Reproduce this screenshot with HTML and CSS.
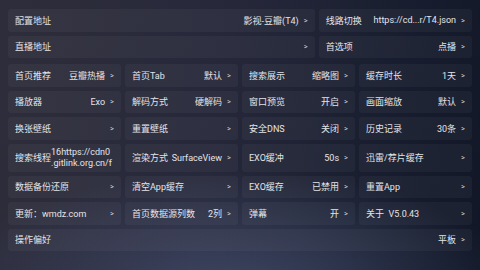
FILE: index.html
```html
<!DOCTYPE html>
<html lang="zh">
<head>
<meta charset="utf-8">
<link rel="stylesheet" href="styles.css">
</head>
<body>
<div class="page">
  <div class="top">
    <div class="cell"><span class="label">配置地址</span><span class="value">影视-豆瓣(T4)</span><span class="arrow">&gt;</span></div>
    <div class="cell"><span class="label">线路切换</span><span class="value">https://cd...r/T4.json</span><span class="arrow">&gt;</span></div>
    <div class="cell"><span class="label">直播地址</span><span class="value"></span><span class="arrow">&gt;</span></div>
    <div class="cell"><span class="label">首选项</span><span class="value">点播</span><span class="arrow">&gt;</span></div>
  </div>
  <div class="grid">
    <div class="cell"><span class="label">首页推荐</span><span class="value">豆瓣热播</span><span class="arrow">&gt;</span></div>
    <div class="cell"><span class="label">首页Tab</span><span class="value">默认</span><span class="arrow">&gt;</span></div>
    <div class="cell"><span class="label">搜索展示</span><span class="value">缩略图</span><span class="arrow">&gt;</span></div>
    <div class="cell"><span class="label">缓存时长</span><span class="value">1天</span><span class="arrow">&gt;</span></div>

    <div class="cell"><span class="label">播放器</span><span class="value">Exo</span><span class="arrow">&gt;</span></div>
    <div class="cell"><span class="label">解码方式</span><span class="value">硬解码</span><span class="arrow">&gt;</span></div>
    <div class="cell"><span class="label">窗口预览</span><span class="value">开启</span><span class="arrow">&gt;</span></div>
    <div class="cell"><span class="label">画面缩放</span><span class="value">默认</span><span class="arrow">&gt;</span></div>

    <div class="cell"><span class="label">换张壁纸</span><span class="value"></span><span class="arrow">&gt;</span></div>
    <div class="cell"><span class="label">重置壁纸</span><span class="value"></span><span class="arrow">&gt;</span></div>
    <div class="cell"><span class="label">安全DNS</span><span class="value">关闭</span><span class="arrow">&gt;</span></div>
    <div class="cell"><span class="label">历史记录</span><span class="value">30条</span><span class="arrow">&gt;</span></div>

    <div class="cell tall"><span class="label">搜索线程</span><span class="multi"><span class="line">16https://cdn0</span><span class="line">.gitlink.org.cn/f</span></span></div>
    <div class="cell tall"><span class="label">渲染方式</span><span class="value">SurfaceView</span><span class="arrow">&gt;</span></div>
    <div class="cell tall"><span class="label">EXO缓冲</span><span class="value">50s</span><span class="arrow">&gt;</span></div>
    <div class="cell tall"><span class="label">迅雷/荐片缓存</span><span class="value"></span><span class="arrow">&gt;</span></div>

    <div class="cell"><span class="label">数据备份还原</span><span class="value"></span><span class="arrow">&gt;</span></div>
    <div class="cell"><span class="label">清空App缓存</span><span class="value"></span><span class="arrow">&gt;</span></div>
    <div class="cell"><span class="label">EXO缓存</span><span class="value">已禁用</span><span class="arrow">&gt;</span></div>
    <div class="cell"><span class="label">重置App</span><span class="value"></span><span class="arrow">&gt;</span></div>

    <div class="cell"><span class="label">更新：wmdz.com</span><span class="value"></span><span class="arrow">&gt;</span></div>
    <div class="cell"><span class="label">首页数据源列数</span><span class="value">2列</span><span class="arrow">&gt;</span></div>
    <div class="cell"><span class="label">弹幕</span><span class="value">开</span><span class="arrow">&gt;</span></div>
    <div class="cell"><span class="label">关于&nbsp; V5.0.43</span><span class="value"></span><span class="arrow">&gt;</span></div>

    <div class="cell full"><span class="label">操作偏好</span><span class="value">平板</span><span class="arrow">&gt;</span></div>
  </div>
</div>
</body>
</html>
```

FILE: styles.css
```css
html, body {
  margin: 0;
  padding: 0;
}
body {
  width: 480px;
  height: 270px;
  overflow: hidden;
  font-family: Roboto, "Noto Sans CJK SC", sans-serif;
  font-size: 9px;
  color: #e4e4e8;
  background:
    radial-gradient(ellipse 60% 45% at 48% 108%, rgba(70, 80, 112, 0.75) 0%, rgba(70, 80, 112, 0) 100%),
    linear-gradient(100deg, #2e2d3b 0%, #26283a 45%, #171d2e 80%, #111726 100%);
}
.page {
  padding: 9px 8px 0 8px;
}
.top {
  display: grid;
  grid-template-columns: 2fr 1fr;
  column-gap: 4px;
  row-gap: 4px;
  grid-auto-rows: 22.5px;
}
.grid {
  margin-top: 6px;
  display: grid;
  grid-template-columns: repeat(4, 1fr);
  column-gap: 4px;
  row-gap: 4px;
  grid-template-rows: 22.5px 22.5px 22.5px 28px 22.5px 22.5px 22.5px;
}
.cell {
  display: flex;
  align-items: center;
  padding: 0 7px;
  border-radius: 3px;
  background: rgba(255, 255, 255, 0.04);
  overflow: hidden;
  white-space: nowrap;
  min-width: 0;
}
.full {
  grid-column: 1 / -1;
}
.label {
  flex: none;
}
.value {
  flex: 1;
  text-align: right;
  min-width: 0;
}
.arrow {
  flex: none;
  margin-left: 5px;
  font-size: 7.5px;
  color: #d0d0d6;
}
.multi {
  flex: 1;
  min-width: 0;
  display: flex;
  flex-direction: column;
  overflow: hidden;
  line-height: 11.5px;
  padding-top: 1px;
}
.line {
  display: block;
  overflow: hidden;
  white-space: nowrap;
}
```
